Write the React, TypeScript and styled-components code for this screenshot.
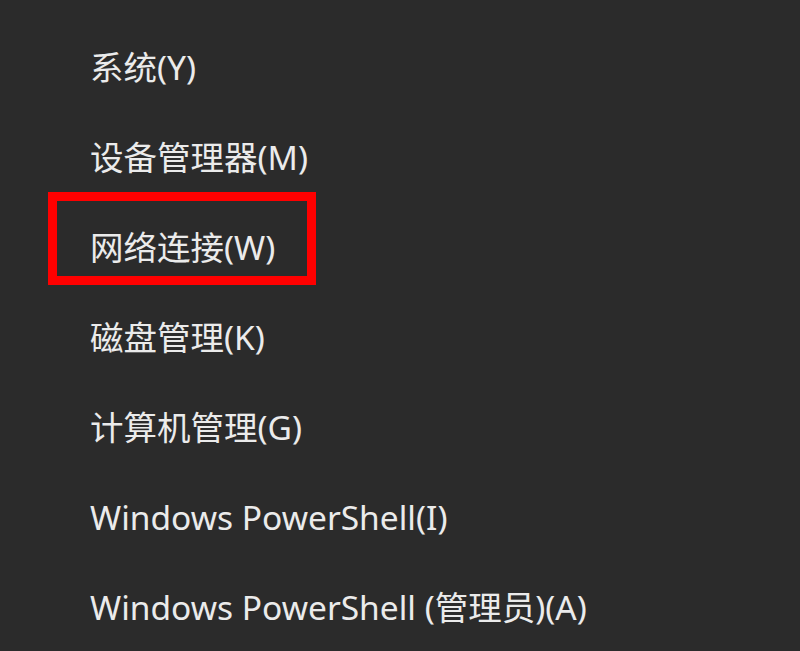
import styled, { createGlobalStyle } from 'styled-components'

const GlobalStyle = createGlobalStyle`
  html, body {
    margin: 0;
    padding: 0;
    background: #2b2b2b;
  }
`

const Menu = styled.ul`
  list-style: none;
  margin: 0;
  padding: 22px 0 0 90px;
  width: 800px;
  height: 651px;
  box-sizing: border-box;
  background: #2b2b2b;
  display: flex;
  flex-direction: column;
  font-family: 'Noto Sans', 'Noto Sans CJK SC', sans-serif;
  font-size: 33.5px;
  color: #ebebeb;
  overflow: hidden;
`

const Item = styled.li<{ $marked?: boolean }>`
  position: relative;
  height: 90.5px;
  line-height: 90px;
  white-space: nowrap;

  ${p =>
    p.$marked &&
    `
    &::after {
      content: '';
      position: absolute;
      left: -42px;
      top: -10px;
      width: 268px;
      height: 93px;
      box-sizing: border-box;
      border: 9px solid #ff0000;
    }
  `}
`

const items = [
  { label: '系统(Y)' },
  { label: '设备管理器(M)' },
  { label: '网络连接(W)', marked: true },
  { label: '磁盘管理(K)' },
  { label: '计算机管理(G)' },
  { label: 'Windows PowerShell(I)' },
  { label: 'Windows PowerShell (管理员)(A)' },
]

export default function App() {
  return (
    <>
      <GlobalStyle />
      <Menu>
        {items.map(item => (
          <Item key={item.label} $marked={item.marked}>
            {item.label}
          </Item>
        ))}
      </Menu>
    </>
  )
}
